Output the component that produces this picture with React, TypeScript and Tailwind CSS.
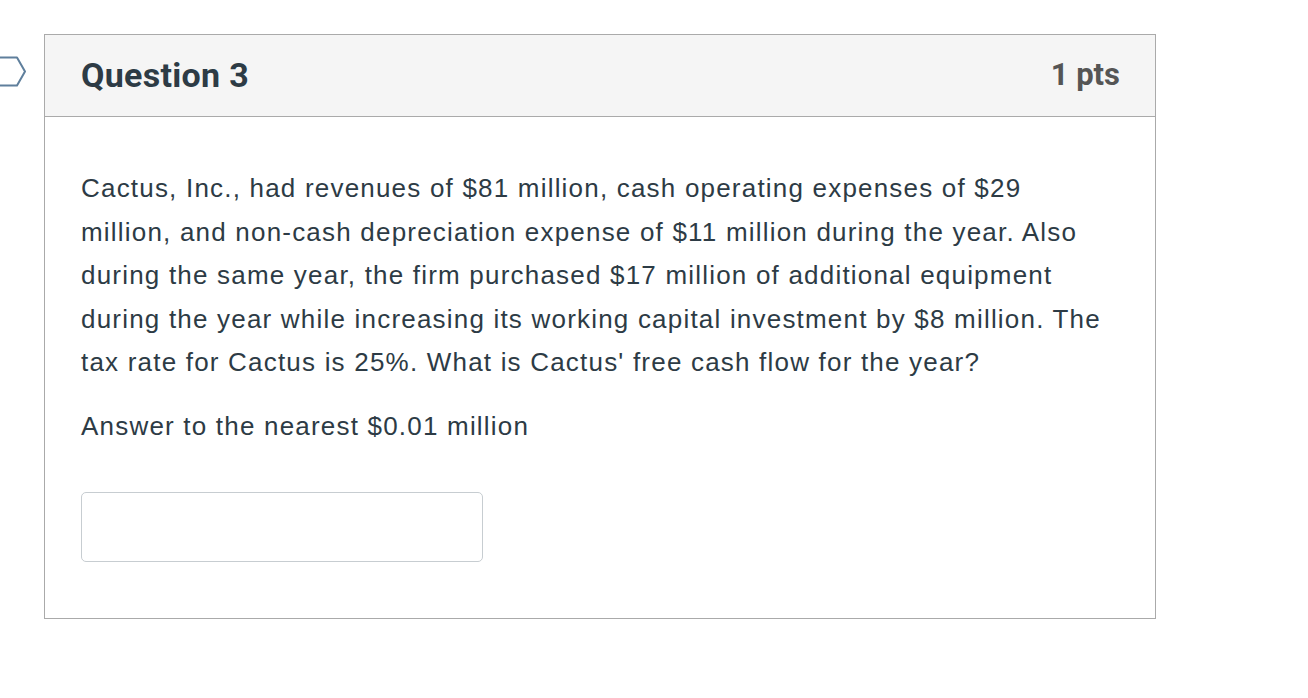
export default function App() {
  return (
    <div className="relative min-h-[698px] w-[1308px] bg-white pt-[34px]">
      {/* pointer marking the current question */}
      <svg className="absolute left-0 top-[56px]" width="30" height="32" viewBox="0 0 30 32">
        <path d="M-4 1.5 H17 L25 15.5 L17 29.5 H-4" fill="none" stroke="#5f7f9c" strokeWidth="2" strokeLinejoin="round" />
      </svg>
      <div className="ml-[44px] w-[1112px] border border-[#aaaaaa]">
        <div className="flex h-[82px] items-center justify-between border-b border-[#aaaaaa] bg-[#f5f5f5] pl-[36px] pr-[35px] font-['Roboto',sans-serif] font-bold">
          <span className="text-[34px] tracking-[0.3px] text-[#2d3b45]">Question 3</span>
          <span className="text-[31px] text-[#555555]">1 pts</span>
        </div>
        <div className="px-[36px] pb-[56px] pt-[50px] font-['Liberation_Sans',Arial,sans-serif] text-[26px] leading-[43.5px] tracking-[1.2px] text-[#2d3b45]">
          <p className="max-w-[1030px]">
            Cactus, Inc., had revenues of $81 million, cash operating expenses of $29 million, and non-cash depreciation expense of $11 million during the year. Also during the same year, the firm purchased $17 million of additional equipment during the year while increasing its working capital investment by $8 million. The tax rate for Cactus is 25%. What is Cactus' free cash flow for the year?
          </p>
          <p className="mt-[20px]">Answer to the nearest $0.01 million</p>
          <input
            type="text"
            className="mt-[44px] block h-[70px] w-[402px] rounded-[5px] border border-[#c7cdd1] bg-white"
          />
        </div>
      </div>
    </div>
  );
}
